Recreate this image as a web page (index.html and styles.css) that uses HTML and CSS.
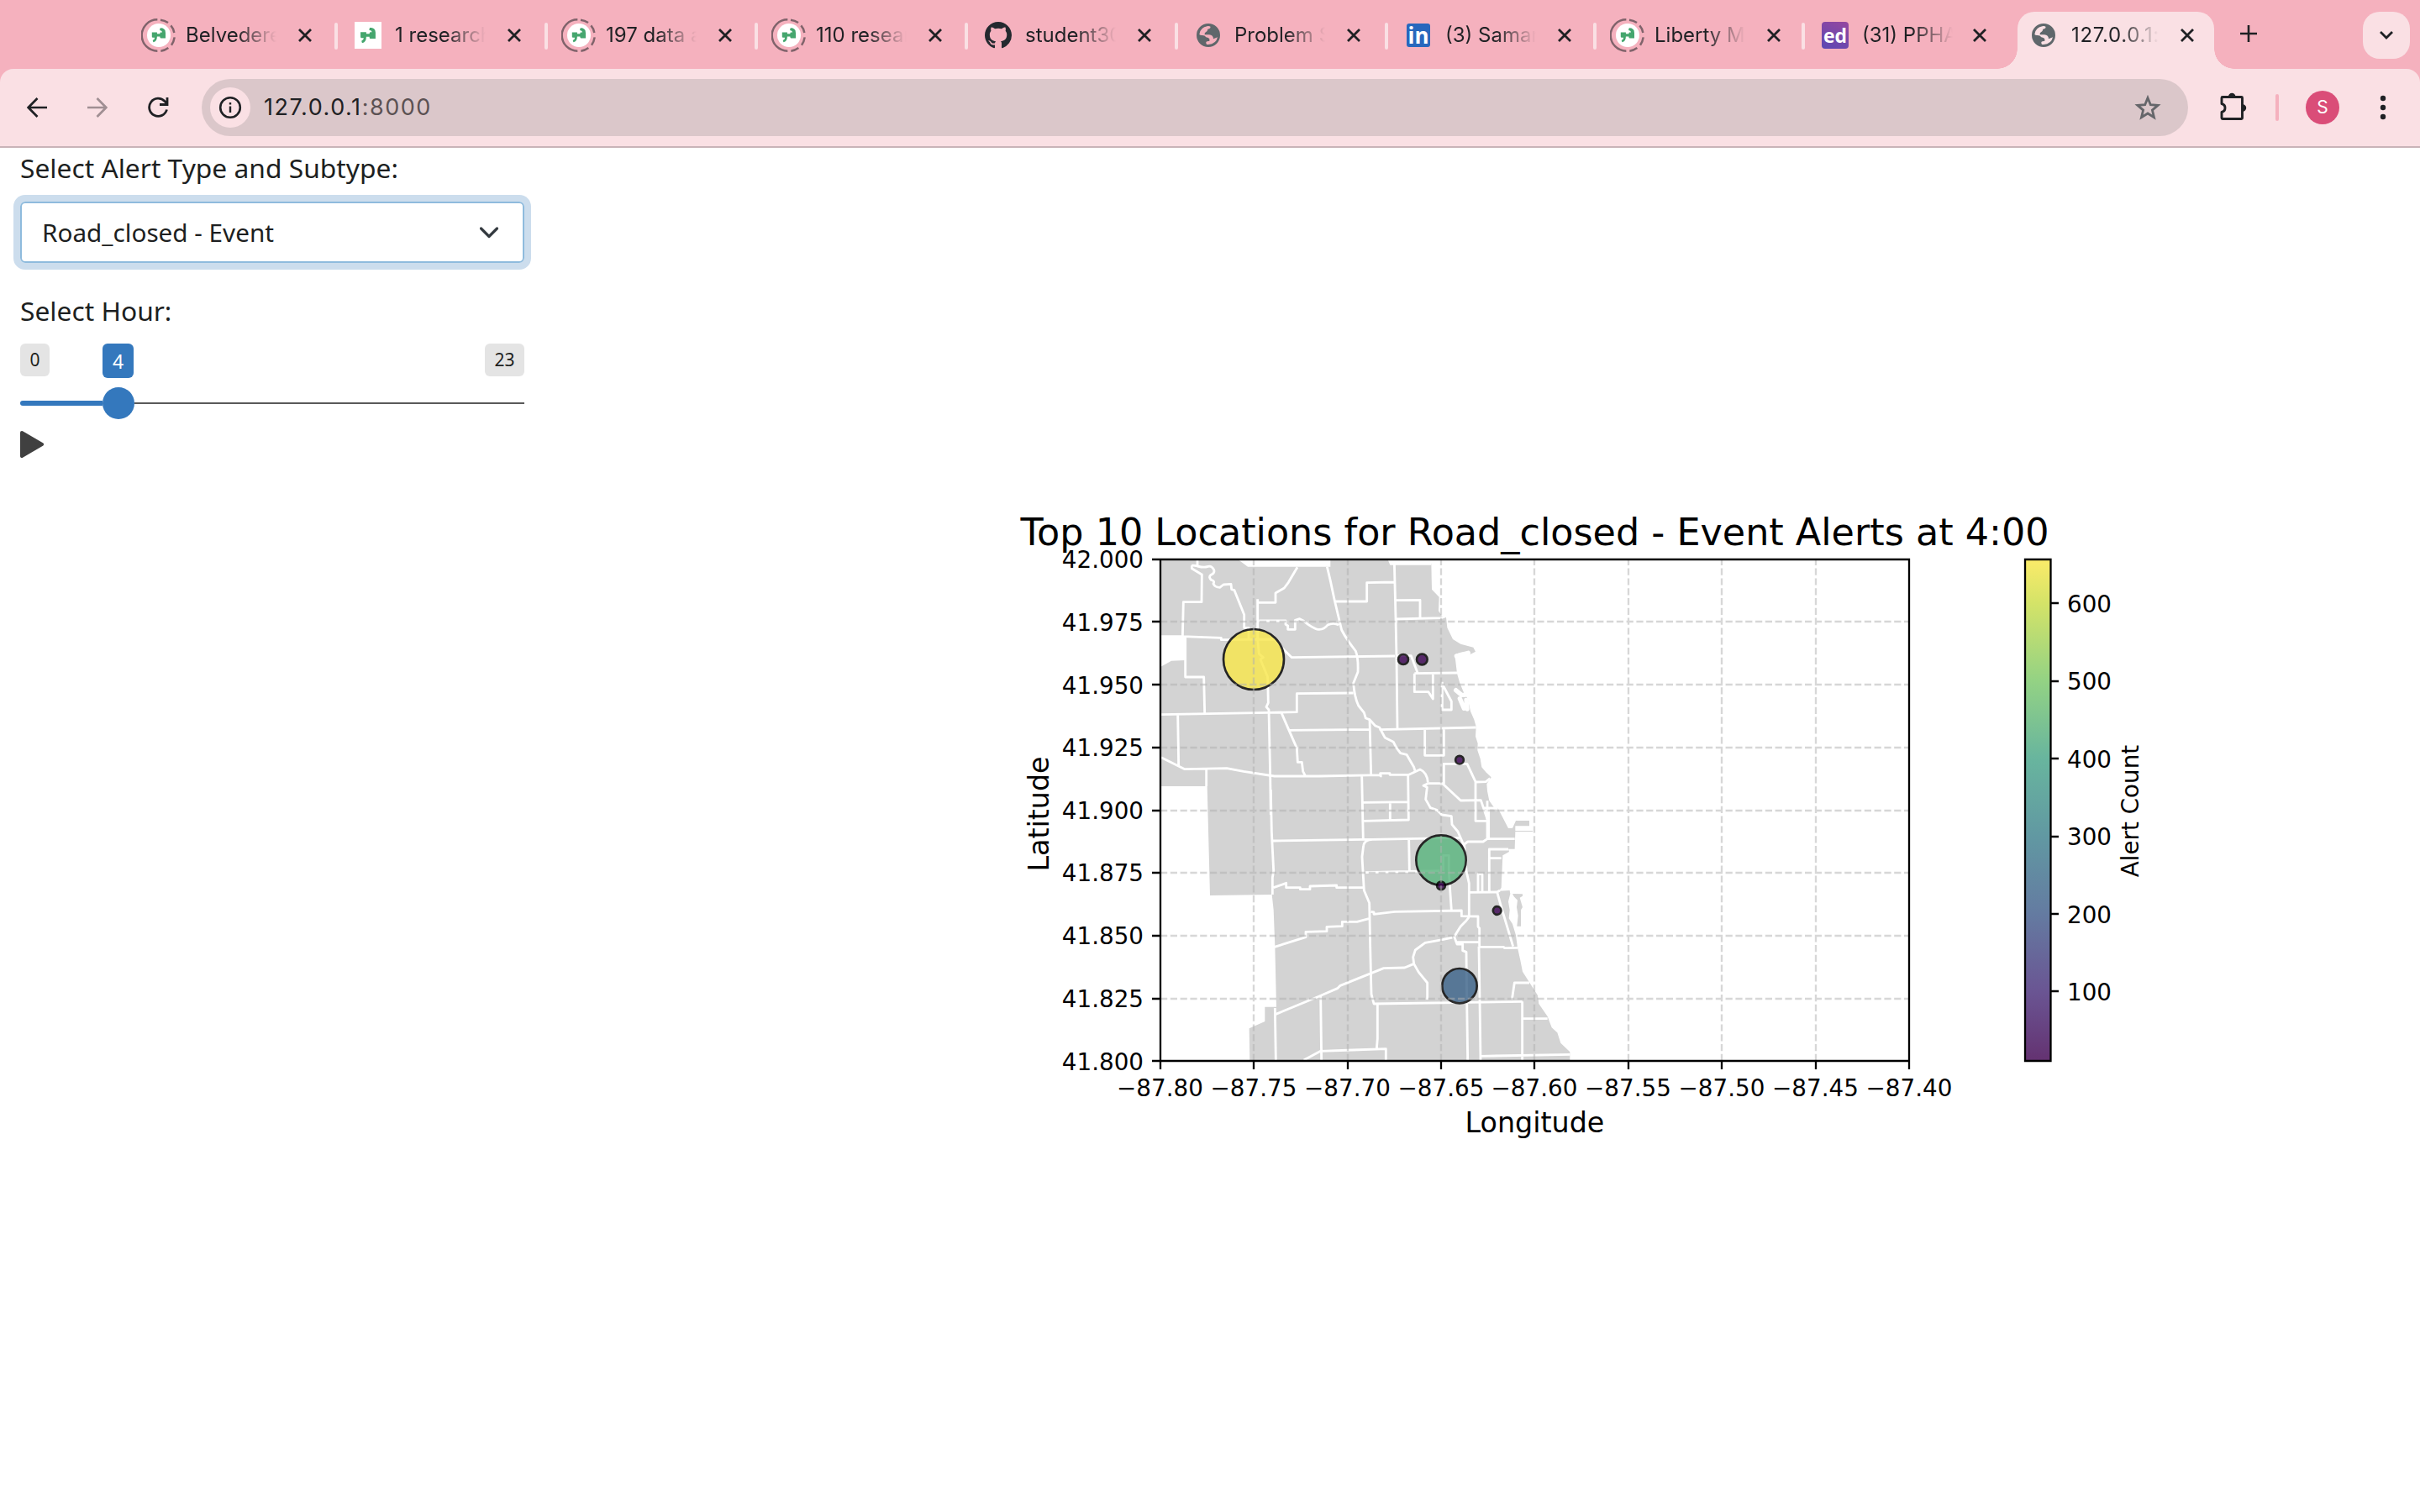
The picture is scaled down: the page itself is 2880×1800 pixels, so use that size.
FILE: index.html
```html
<!DOCTYPE html>
<html lang="en">
<head>
<meta charset="utf-8">
<title>127.0.0.1:8000</title>
<link rel="stylesheet" href="styles.css">
</head>
<body>
<svg class="defs" aria-hidden="true">
  <symbol id="quote" viewBox="0 0 50 50"><path d="M1 15h18v14q0 17-13 20l-2-7q7-2 7-9H5q-4 0-4-4zM30 0q18 0 18 16v19H32q-3 0-3-4V19q0-4 3-4h5q-1-6-9-7zM18 20h12v9H18z" fill="#45a66e"/></symbol>
  <symbol id="ringed" viewBox="21 33 126 126">
    <circle cx="84" cy="96" r="42" fill="#fff"/>
    <use href="#quote" x="58" y="69" width="52" height="54"/>
    <g fill="none" stroke="#80636b" stroke-width="7.500"><path d="M79 40A56 56 0 0 0 79 152M90 41Q105 43 117 51M127 61Q136 71 139 87M140 103Q138 118 129 131M118 141Q106 150 91 152"/></g>
  </symbol>
  <symbol id="plainquote" viewBox="0 0 96 96"><path fill="#fff" d="M0 0h96v96H0z"/><use href="#quote" x="20" y="20" width="57" height="57"/></symbol>
  <symbol id="github" viewBox="0 0 16 16"><path fill="#24292f" d="M8 0C3.58 0 0 3.58 0 8c0 3.54 2.29 6.53 5.47 7.59.4.07.55-.17.55-.38 0-.19-.01-.82-.01-1.49-2.01.37-2.53-.49-2.69-.94-.09-.23-.48-.94-.82-1.13-.28-.15-.68-.52-.01-.53.63-.01 1.08.58 1.23.82.72 1.21 1.87.87 2.33.66.07-.52.28-.87.51-1.07-1.78-.2-3.64-.89-3.64-3.95 0-.87.31-1.59.82-2.15-.08-.2-.36-1.02.08-2.12 0 0 .67-.21 2.2.82a7.6 7.6 0 0 1 4 0c1.53-1.04 2.2-.82 2.2-.82.44 1.1.16 1.92.08 2.12.51.56.82 1.27.82 2.15 0 3.07-1.87 3.75-3.65 3.95.29.25.54.73.54 1.48 0 1.07-.01 1.93-.01 2.2 0 .21.15.46.55.38A8.01 8.01 0 0 0 16 8c0-4.42-3.58-8-8-8z"/></symbol>
  <symbol id="globe" viewBox="0 0 84 84"><path fill="#5f676b" fill-rule="evenodd" d="M42 0a42 42 0 1 0 0 84 42 42 0 0 0 0-84zM10 39Q12 14 40 9Q52 8 49 16Q46 20 40 20Q39 28 33 31Q28 33 29 40L45 40Q60 42 60 55L75 49Q70 73 42 75Q33 77 34 66Q38 62 46 63L46 55Q43 50 34 49Q30 42 20 42Q14 43 10 39z"/></symbol>
  <symbol id="x" viewBox="0 0 18 18"><path d="M2 2l14 14M16 2L2 16" fill="none" stroke="#1f2124" stroke-width="2.8"/></symbol>
</svg>

<header class="browser">
  <div class="tabs">
    <div class="tab"><svg class="fav ring"><use href="#ringed"/></svg><span class="name">Belvedere</span><svg class="close"><use href="#x"/></svg></div>
    <div class="tab"><svg class="fav"><use href="#plainquote"/></svg><span class="name">1 research</span><svg class="close"><use href="#x"/></svg></div>
    <div class="tab"><svg class="fav ring"><use href="#ringed"/></svg><span class="name">197 data a</span><svg class="close"><use href="#x"/></svg></div>
    <div class="tab"><svg class="fav ring"><use href="#ringed"/></svg><span class="name">110 resear</span><svg class="close"><use href="#x"/></svg></div>
    <div class="tab"><svg class="fav"><use href="#github"/></svg><span class="name">student30</span><svg class="close"><use href="#x"/></svg></div>
    <div class="tab"><svg class="fav small"><use href="#globe"/></svg><span class="name">Problem S</span><svg class="close"><use href="#x"/></svg></div>
    <div class="tab narrow"><span class="fav linkedin">in</span><span class="name">(3) Samar</span><svg class="close"><use href="#x"/></svg></div>
    <div class="tab narrow"><svg class="fav ring"><use href="#ringed"/></svg><span class="name">Liberty Mu</span><svg class="close"><use href="#x"/></svg></div>
    <div class="tab narrow last"><span class="fav ed">ed</span><span class="name">(31) PPHA</span><svg class="close"><use href="#x"/></svg></div>
    <div class="tab active"><svg class="fav small"><use href="#globe"/></svg><span class="name">127.0.0.1:8</span><svg class="close"><use href="#x"/></svg></div>
    <svg class="plus" viewBox="0 0 20 20"><path d="M10 0v20M0 10h20" stroke="#1f2124" stroke-width="2.6"/></svg>
    <div class="tabmenu"><svg width="16" height="10" viewBox="0 0 16 10"><path d="M1 1l7 7 7-7" fill="none" stroke="#1f2124" stroke-width="2.8"/></svg></div>
  </div>
  <div class="toolbar">
    <svg class="nav" viewBox="0 0 24 24" fill="none" stroke="#1f2124" stroke-width="2.7"><path d="M24 12H2M12.5 1L1.7 12l10.8 11"/></svg>
    <svg class="nav" viewBox="0 0 24 24" fill="none" stroke="#a08f93" stroke-width="2.7"><path d="M0 12h22M11.500 1l10.800 11-10.800 11"/></svg>
    <svg class="nav reload" viewBox="0 0 26 26" fill="none" stroke="#1f2124" stroke-width="2.8"><path d="M23.500 15.500A10.600 10.600 0 1 1 21 5.500L24 8.500M24 1v8.500h-9"/></svg>
    <div class="address">
      <span class="info"><svg width="28" height="28" viewBox="0 0 28 28"><circle cx="14" cy="14" r="11.800" fill="none" stroke="#1f2124" stroke-width="2.600"/><path d="M14 12.500V20M14 8v2.600" stroke="#1f2124" stroke-width="2.400"/></svg></span>
      <span class="url">127.0.0.1<span>:8000</span></span>
      <svg class="star" width="32" height="31" viewBox="0 0 32 31"><path d="M16 3.500l3.300 8.200 8.800.7-6.700 5.700 2.100 8.600L16 22l-7.500 4.700 2.100-8.600-6.700-5.700 8.800-.7z" fill="none" stroke="#65666a" stroke-width="2.800"/></svg>
    </div>
    <svg class="puzzle" viewBox="0 0 34 34"><path d="M3 6.500Q3 5.500 4 5.500H26.500Q27.500 5.500 27.500 6.500V30.500Q27.500 31.500 26.500 31.500H4Q3 31.500 3 30.500V23.500Q7 22.500 7 18.500T3 13.500z" fill="none" stroke="#1f2124" stroke-width="2.900" stroke-linejoin="round"/><path d="M11 5a4.200 4.200 0 0 1 8.400 0zM28 14.300a4.200 4.200 0 0 1 0 8.400z" fill="#1f2124"/></svg>
    <span class="divider"></span>
    <span class="avatar">S</span>
    <svg class="dots" viewBox="0 0 8 30"><g fill="#1f2124"><circle cx="4" cy="4" r="3.200"/><circle cx="4" cy="15" r="3.200"/><circle cx="4" cy="26" r="3.200"/></g></svg>
  </div>
</header>

<main>
  <form class="controls">
    <label class="label">Select Alert Type and Subtype:</label>
    <div class="select"><span>Road_closed - Event</span><svg width="24" height="16" viewBox="0 0 24 16"><path d="M2.500 3l9.500 9.500L21.500 3" fill="none" stroke="#343a40" stroke-width="3.200" stroke-linecap="round" stroke-linejoin="round"/></svg></div>
    <label class="label hour">Select Hour:</label>
    <div class="badges"><span class="badge">0</span><span class="badge current">4</span><span class="badge max">23</span></div>
    <div class="slider"><span class="fill"></span><span class="handle"></span><span class="rest"></span></div>
    <svg class="play" viewBox="0 0 28 32"><path d="M2 2L26 16 2 30z" fill="#404040" stroke="#404040" stroke-width="4" stroke-linejoin="round"/></svg>
  </form>

  <svg class="plot" viewBox="1200 600 1380 770">
    <defs>
      <clipPath id="axes"><path d="M1381 666H2272V1263H1381z"/></clipPath>
      <linearGradient id="viridis" x1="0" y1="0" x2="0" y2="1">
        <stop offset="0" stop-color="#fbeb69"/><stop offset=".087" stop-color="#d4e368"/><stop offset=".243" stop-color="#93d284"/><stop offset=".397" stop-color="#68b59e"/><stop offset=".553" stop-color="#6198a2"/><stop offset=".707" stop-color="#647ba1"/><stop offset=".861" stop-color="#6a5593"/><stop offset="1" stop-color="#643271"/>
      </linearGradient>
    </defs>
    <g clip-path="url(#axes)">
      <g transform="translate(1370 650) scale(.33333)">
        <path class="land" d="M30 48H310L345 74H640V48H850L855 62H1000L1002 155 1028 182 1026 232 1038 250 1053 255 1057 292 1077 333 1105 350 1150 362 1158 377 1138 388 1128 378 1105 380 1083 388 1086 405 1092 455 1102 490 1118 528 1130 545 1140 590 1153 620 1160 645 1158 680 1166 705 1165 730 1175 760 1180 790 1195 808 1214 826 1198 850 1200 875 1207 910 1225 935 1238 937 1275 1008 1290 1008 1302 981H1350V1000H1300V1017H1362V1020H1300L1298 1082H1275L1278 1092 1255 1105 1250 1220 1242 1232 1280 1230 1282 1242 1275 1270 1280 1300 1277 1330 1290 1350 1302 1390 1308 1435 1318 1480 1326 1520 1348 1555 1380 1605 1384 1635 1415 1680 1430 1720 1450 1738 1462 1775 1495 1807V1840H352L350 1723 406 1698V1646H447L442 1430 437 1300 431 1245 210 1248 200 858H30V434L72 410 122 408V325H30z"/>
        <path class="land" d="M1290 1242L1326 1243V1250L1316 1256 1326 1290 1320 1300V1358H1306L1310 1320 1305 1290 1308 1265 1295 1252z"/>
        <g class="borders">
          <path d="M165 48V70M145 70Q150 68 165 72Q190 78 200 74Q215 68 224 85Q228 98 212 104Q204 112 215 122Q228 124 222 135Q228 148 245 148L258 138 285 136 287 155 297 158 332 245V292H348V330M145 70V80L181 102 180 200H115L112 325M36 323H112L250 328V335H275L440 333 475 372 502 398 870 393M122 328V468H188L191 598M380 190V290M380 202H444V168L475 150 490 130 522 76M380 290V333L385 385 400 398 390 405 416 468 418 560 411 575 420 585 425 820 427 960"/>
          <path d="M385 267H480V280L488 285V298H514V265L530 260 545 268 560 280Q590 300 600 298Q618 298 630 282Q650 272 670 282M628 74L640 125 655 195 680 300Q695 330 730 375Q740 400 738 450L722 490Q726 540 740 570L760 595 766 615 780 620 800 642 815 648 835 685 865 700 875 720 890 740 912 745 938 790 942 803M655 198H770V131L868 129M868 55L873 255 876 400 879 652M850 50L856 64H1000M873 194L960 193V258M873 261L1035 257 1053 250M875 392H928L952 455M940 455V521H990L1006 546V455M940 455L1092 453"/>
          <path d="M36 602L418 595 520 593V527L722 525M95 603L98 785M36 755L120 797 270 794 330 805 440 822H600L815 818 820 822 818 812H852V817H920L960 798Q985 808 988 845M197 797V858M466 598L492 658 520 722 523 772H538L542 805 550 820M492 658L780 655M780 620L785 815M815 656L1160 648M977 655V748H1045V652M752 820L755 960 757 1050M755 916L917 914M917 817L919 978 760 982M853 918V978"/>
        </g>
        <g class="borders" transform="translate(720 0)">
          <path d="M268 848L252 856 265 862 260 905 277 935 300 943 318 960 352 965 354 995 375 1020 390 1055 398 1070 405 1160 415 1205V1325M268 848H320L385 909 457 908 480 975M325 850V778H408L438 842V982H478M438 843L475 842 490 830M319 485V585H352V555L322 498M468 935L518 937M485 940V1045"/>
          <path class="harbor" d="M368 515L388 532H400M382 545L397 580M405 550L408 582M370 393L412 382"/>
        </g>
        <g class="borders" transform="translate(0 870)">
          <path d="M427 0L430 150 437 290 433 315V375M437 350L482 334V350H532V356H567V345L662 342V350H760M435 183L760 178 790 178 1105 172M790 178Q760 180 758 200L753 240 760 360 779 405 782 560 786 730 795 765 1325 757M440 562L552 527V508L627 506V490L682 488V472H735L780 460M785 436L795 438V445L870 436 1108 432V452L1167 453V490L1172 495V560M920 178L922 292M765 296L920 292 1030 290"/>
          <path d="M445 802L600 738 665 710 675 700 830 638 905 636 938 622 935 598 943 573 978 547 1040 536 1075 528M938 622L955 652 986 690V750M605 738L608 966M545 966L605 934 720 930 838 926V966M808 765V890L805 925M442 780L445 966"/>
        </g>
        <g class="borders" transform="translate(720 870)">
          <path d="M323 290V235H343V300L352 430M415 455L405 468 385 488 362 525 372 552H392V575L405 580 407 750 410 966M372 545H450M450 560L453 750 456 966M450 562H538L542 566 588 565M415 367L515 366 525 360M515 366L530 420 572 560M447 362V302H462V362M487 365V213H555M487 245H530M398 195L410 186H465L480 176H578M480 176V40M568 750L577 690H630M605 757V966M607 818H695M456 952L775 946"/>
        </g>
        <g class="points">
          <circle cx="366" cy="405" r="108" fill="#f8e74d"/>
          <circle cx="1035" cy="1122" r="89" fill="#5ab57e"/>
          <circle cx="1101" cy="1571" r="62" fill="#3d6489"/>
          <circle cx="900" cy="405" r="18" fill="#3d0553"/>
          <circle cx="967" cy="405" r="19" fill="#3d0553"/>
          <circle cx="1101" cy="764" r="14.500" fill="#3d0553"/>
          <circle cx="1035" cy="1213" r="14.500" fill="#3d0553"/>
          <circle cx="1235" cy="1302" r="14.500" fill="#3d0553"/>
        </g>
      </g>
      <path class="grid" d="M1492 1263V666M1604 1263V666M1715 1263V666M1826 1263V666M1938 1263V666M2049 1263V666M2161 1263V666M1381 740H2272M1381 815H2272M1381 890H2272M1381 965H2272M1381 1039H2272M1381 1114H2272M1381 1189H2272"/>
    </g>
    <path class="axis" d="M1381 666H2272V1263H1381zM1381 1263v10M1492 1263v10M1604 1263v10M1715 1263v10M1826 1263v10M1938 1263v10M2049 1263v10M2161 1263v10M2272 1263v10M1381 666h-10M1381 740h-10M1381 815h-10M1381 890h-10M1381 965h-10M1381 1039h-10M1381 1114h-10M1381 1189h-10M1381 1263h-10"/>
    <rect x="2410" y="666" width="30.500" height="597" fill="url(#viridis)"/>
    <path class="axis" d="M2410 666h30.500v597h-30.500zM2440 718h10M2440 811h10M2440 903h10M2440 996h10M2440 1088h10M2440 1180h10"/>
    <text class="title" x="1826.500" y="648.500">Top 10 Locations for Road_closed - Event Alerts at 4:00</text>
    <g class="ticks end">
      <text x="1361" y="676">42.000</text><text x="1361" y="750.500">41.975</text><text x="1361" y="825.500">41.950</text><text x="1361" y="900">41.925</text><text x="1361" y="975">41.900</text><text x="1361" y="1049">41.875</text><text x="1361" y="1124">41.850</text><text x="1361" y="1199">41.825</text><text x="1361" y="1274">41.800</text>
    </g>
    <g class="ticks middle">
      <text x="1380.500" y="1305">−87.80</text><text x="1492" y="1305">−87.75</text><text x="1603.500" y="1305">−87.70</text><text x="1715" y="1305">−87.65</text><text x="1826" y="1305">−87.60</text><text x="1937.500" y="1305">−87.55</text><text x="2049" y="1305">−87.50</text><text x="2160.500" y="1305">−87.45</text><text x="2272" y="1305">−87.40</text>
    </g>
    <g class="ticks">
      <text x="2460" y="728.500">600</text><text x="2460" y="821">500</text><text x="2460" y="913.500">400</text><text x="2460" y="1006">300</text><text x="2460" y="1098.500">200</text><text x="2460" y="1191">100</text>
    </g>
    <text class="axlabel" x="1826.500" y="1347.500">Longitude</text>
    <text class="axlabel" transform="translate(1247.500 969) rotate(-90)">Latitude</text>
    <g class="ticks middle"><text transform="translate(2544.500 965.500) rotate(-90)">Alert Count</text></g>
  </svg>
</main>
</body>
</html>
```
FILE: styles.css
```css
* { box-sizing: border-box; }
body { margin: 0; background: #fff; color: #1d1f21; font-family: "Noto Sans", sans-serif; }
svg { display: block; flex: none; }
.defs { position: absolute; width: 0; height: 0; }

.browser { height: 176px; background: #f5b1be; font-family: Inter, sans-serif; color: #1f2124; }
.tabs { display: flex; height: 82px; padding-left: 152px; }
.tab { position: relative; display: flex; align-items: center; width: 250px; height: 82px; }
.tab.narrow { width: 248px; }
.tab::after { content: ""; position: absolute; right: 0; top: 27px; width: 4px; height: 32px; border-radius: 2px; background: #fae0e4; }
.tab.last::after { display: none; }
.fav { width: 32px; height: 32px; margin: 2px 16px 0 20px; }
.fav.ring { width: 42px; height: 42px; margin: 2px 11px 0 16px; }
.fav.small { width: 28px; height: 28px; margin: 2px 17px 0 22px; }
.linkedin { flex: none; width: 28px; height: 28px; margin: 2px 18px 0 22px; border-radius: 3px; background: #2867bd; color: #fff; font: bold 26px/29px "Open Sans", sans-serif; text-align: center; }
.fav.linkedin { width: 28px; height: 28px; margin: 2px 18px 0 22px; }
.ed { flex: none; border-radius: 4px; background: linear-gradient(25deg, #5b48b4, #96479f); color: #fff; font: bold 23px/33px "Open Sans", sans-serif; text-align: center; }
.name { width: 110px; margin-top: 2px; overflow: hidden; white-space: nowrap; font-size: 24px; line-height: 32px; -webkit-mask-image: linear-gradient(90deg, #000 55%, transparent 98%); mask-image: linear-gradient(90deg, #000 55%, transparent 98%); }
.close { width: 18px; height: 18px; margin: 2px 0 0 23px; }
.last .close { margin-left: 21px; }
.tab.active { width: 234px; height: 68px; margin: 14px 0 0 5px; padding: 0 0 14px; border-radius: 20px 20px 0 0; background: #fae0e4; }
.active .fav.small { margin: 2px 19px 0 17px; }
.active .name { width: 106px; letter-spacing: .7px; }
.tab.active::after, .tab.active::before { content: ""; display: block; position: absolute; top: auto; bottom: 0; width: 24px; height: 24px; border-radius: 0; }
.tab.active::before { left: -24px; background: radial-gradient(circle at 0 0, transparent 23.500px, #fae0e4 24px); }
.tab.active::after { right: -24px; background: radial-gradient(circle at 100% 0, transparent 23.500px, #fae0e4 24px); }
.plus { width: 20px; height: 20px; margin: 30px 0 0 31px; }
.tabmenu { display: flex; align-items: center; justify-content: center; width: 56px; height: 56px; margin: 14px 12px 0 auto; border-radius: 20px; background: #fae0e4; }

.toolbar { display: flex; align-items: center; height: 94px; padding: 0 40px 0 32px; border-bottom: 2px solid #c9b3b8; border-radius: 16px 16px 0 0; background: #fae0e4; }
.nav { width: 24px; height: 24px; margin-right: 48px; }
.nav.reload { width: 26px; height: 26px; margin: 0 39px 0 -1px; }
.address { display: flex; align-items: center; width: 2364px; height: 68px; padding: 0 32px 0 10px; border-radius: 34px; background: #dbc7ca; }
.info { display: flex; align-items: center; justify-content: center; width: 48px; height: 48px; border-radius: 50%; background: #fae0e4; }
.url { margin-left: 16px; font-size: 27px; line-height: 40px; letter-spacing: 1.550px; white-space: nowrap; }
.url span { color: #5b5153; }
.star { margin-left: auto; }
.puzzle { width: 34px; height: 34px; margin: -3px 0 0 37px; }
.divider { width: 4px; height: 32px; margin-left: 33px; border-radius: 2px; background: #f5b1be; }
.avatar { width: 40px; height: 40px; margin-left: 32px; border-radius: 50%; background: #da4d78; color: #fff; font-size: 21px; line-height: 40px; text-align: center; }
.dots { width: 8px; height: 30px; margin-left: auto; }

main { display: flex; flex-direction: column; }
.controls { display: flex; flex-direction: column; width: 600px; margin-left: 24px; }
.label { font-size: 31.750px; line-height: 48px; white-space: nowrap; }
.select { display: flex; align-items: center; justify-content: space-between; height: 73px; margin-top: 16px; padding: 0 28px 0 24px; border: 2px solid #8fbbdd; border-radius: 6px; box-shadow: 0 0 0 8px #ccdded; font-size: 29.700px; line-height: 44px; white-space: nowrap; }
.label.hour { margin-top: 33px; }
.badges { display: flex; align-items: flex-start; height: 41px; margin-top: 15px; }
.badge { width: 35px; height: 39px; border-radius: 6px; background: #e4e4e4; font-size: 21px; line-height: 38px; text-align: center; }
.badge.current { width: 37px; height: 41px; margin-left: 63px; background: #3478bd; color: #fff; font-size: 23px; line-height: 42px; }
.badge.max { width: 47px; margin-left: auto; }
.slider { display: flex; align-items: center; height: 38px; margin-top: 11px; }
.fill { width: 98px; height: 6px; border-radius: 3px 0 0 3px; background: #3478bd; }
.handle { width: 38px; height: 38px; border-radius: 50%; background: #3478bd; }
.rest { flex: 1; height: 2px; background: #595959; }
.play { width: 28px; height: 32px; margin-top: 14px; }

.plot { width: 1380px; height: 770px; margin: 55px 0 0 1200px; font-family: "DejaVu Sans", sans-serif; }
.plot text { fill: #000; }
.land { fill: #d3d3d3; }
.borders { fill: none; stroke: #fff; stroke-width: 8.500; stroke-linejoin: round; }
.harbor { stroke-width: 16; stroke-linecap: round; }
.points circle { stroke: #000; stroke-width: 8; opacity: .82; }
.grid { fill: none; stroke: #b0b0b0; stroke-opacity: .5; stroke-width: 2.300; stroke-dasharray: 8.200 3.600; }
.axis { fill: none; stroke: #000; stroke-width: 2.300; }
.title { font-size: 44.440px; text-anchor: middle; }
.ticks { font-size: 27.780px; }
.end { text-anchor: end; }
.middle { text-anchor: middle; }
.axlabel { font-size: 33.330px; text-anchor: middle; }
```
